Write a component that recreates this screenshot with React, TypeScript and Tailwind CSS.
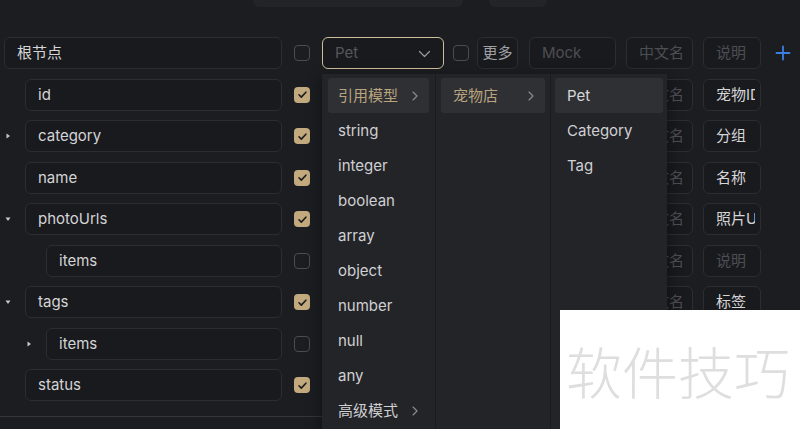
import React from 'react';

const FONT = { fontFamily: 'Inter, "Noto Sans CJK SC", sans-serif' };

type Row = { name: string; level: number; caret?: 'right' | 'down'; checked: boolean; desc?: string; hidden?: boolean };

const ROWS: Row[] = [
  { name: 'id', level: 1, checked: true, desc: '宠物ID' },
  { name: 'category', level: 1, caret: 'right', checked: true, desc: '分组' },
  { name: 'name', level: 1, checked: true, desc: '名称' },
  { name: 'photoUrls', level: 1, caret: 'down', checked: true, desc: '照片Urls' },
  { name: 'items', level: 2, checked: false },
  { name: 'tags', level: 1, caret: 'down', checked: true, desc: '标签' },
  { name: 'items', level: 2, caret: 'right', checked: false, hidden: true },
  { name: 'status', level: 1, checked: true, hidden: true }
];

const TYPES = ['string', 'integer', 'boolean', 'array', 'object', 'number', 'null', 'any'];

const Checkbox = ({ checked, className = '' }: { checked: boolean; className?: string }) =>
  checked ? (
    <span className={`flex h-4 w-4 shrink-0 items-center justify-center rounded-[4px] bg-[#c2aa7e] ${className}`}>
      <svg width="11" height="11" viewBox="0 0 12 12" fill="none">
        <path d="M2.2 6.3l2.5 2.5 5-5.3" stroke="#1d1d1f" strokeWidth="1.8" strokeLinecap="round" strokeLinejoin="round" />
      </svg>
    </span>
  ) : (
    <span className={`block h-4 w-4 shrink-0 rounded-[4px] border border-[#4b4c52] ${className}`} />
  );

const Caret = ({ dir }: { dir: 'right' | 'down' }) => (
  <svg width="6" height="6" viewBox="0 0 6 6" className="text-[#c8c8c8]">
    {dir === 'right' ? <path d="M1.5 0.5L5 3 1.5 5.5z" fill="currentColor" /> : <path d="M0.5 1.5L5.5 1.5 3 5z" fill="currentColor" />}
  </svg>
);

const Chevron = ({ className = '' }: { className?: string }) => (
  <svg width="8" height="12" viewBox="0 0 8 12" fill="none" className={className}>
    <path d="M2 2l4 4-4 4" stroke="currentColor" strokeWidth="1.1" strokeLinecap="round" strokeLinejoin="round" />
  </svg>
);

const Box = ({ className = '', children }: { className?: string; children?: React.ReactNode }) => (
  <div className={`flex h-8 shrink-0 items-center overflow-hidden whitespace-nowrap rounded-md border border-[#2c2d32] bg-[#191a1e] pt-px text-[15px] ${className}`}>
    {children}
  </div>
);

const RestColumns = ({ desc, hidden }: { desc?: string; hidden?: boolean }) => (
  <>
    <Box className="ml-[12px] w-[122px] px-3" />
    <Checkbox checked={false} className="ml-[9px]" />
    <Box className="ml-[8px] w-[41px]" />
    <Box className="ml-[11px] w-[87px]" />
    <Box className="ml-[10px] w-[67px] px-3 text-[#4d4e53]">{!hidden && '中文名'}</Box>
    <Box className={`ml-[10px] w-[58px] pl-3 pr-[5px] ${desc ? 'text-[#d6d6d8]' : 'text-[#4d4e53]'}`}>
      <span className="block flex-1 overflow-hidden">{hidden ? '' : desc || '说明'}</span>
    </Box>
  </>
);

export default function App() {
  return (
    <div className="relative h-[429px] w-[800px] overflow-hidden bg-[#1c1d21] text-[#d4d4d6]" style={FONT}>
      <div className="flex h-[7px]">
        <div className="ml-[253px] w-[210px] rounded-b-md bg-[#232428]" />
        <div className="ml-[26px] w-[58px] rounded-b-md bg-[#232428]" />
      </div>

      <div className="flex flex-col gap-[9.5px] pt-[30px]">
        <div className="flex items-center">
          <Box className="ml-[4px] w-[278px] px-3 text-[#d6d6d8]">根节点</Box>
          <Checkbox checked={false} className="ml-[12px]" />
          <Box className="ml-[12px] w-[122px] border-[#cdbf9c] pl-3 pr-3 text-[#55565b]">
            <span className="flex-1">Pet</span>
            <svg width="13" height="8" viewBox="0 0 13 8" fill="none">
              <path d="M1.5 1.5l5 5 5-5" stroke="#9a9a9e" strokeWidth="1.2" strokeLinecap="round" strokeLinejoin="round" />
            </svg>
          </Box>
          <Checkbox checked={false} className="ml-[9px]" />
          <Box className="ml-[8px] w-[41px] justify-center text-[13px] text-[#a0a0a4]">更多</Box>
          <Box className="ml-[11px] w-[87px] px-3 text-[#4d4e53]">Mock</Box>
          <Box className="ml-[10px] w-[67px] px-3 text-[#4d4e53]">中文名</Box>
          <Box className="ml-[10px] w-[58px] px-3 text-[#4d4e53]">说明</Box>
          <svg width="16" height="16" viewBox="0 0 16 16" className="ml-[14px]">
            <path d="M8 1.5v13M1.5 8h13" stroke="#3d7fe0" strokeWidth="1.8" strokeLinecap="round" />
          </svg>
        </div>

        {ROWS.map((r, i) => (
          <div key={i} className="flex items-center">
            <div className={`flex shrink-0 items-center justify-center ${r.level === 1 ? 'w-[25px] pr-[9px]' : 'w-[46px] pl-[21px] pr-[9px]'}`}>
              {r.caret && <Caret dir={r.caret} />}
            </div>
            <Box className={`${r.level === 1 ? 'w-[257px]' : 'w-[236px]'} px-3 text-[#d4d4d6]`}>{r.name}</Box>
            <Checkbox checked={r.checked} className="ml-[12px]" />
            <RestColumns desc={r.desc} hidden={r.hidden} />
          </div>
        ))}
      </div>

      <div className="absolute bottom-[12px] left-0 right-0 h-px bg-[#35363b]" />

      <div className="absolute left-[322px] top-[74px] flex h-[360px] w-[345px] bg-[#232428] text-[15px] shadow-[0_4px_14px_rgba(0,0,0,0.45)]">
        <div className="flex w-[114px] flex-col border-r border-[#1a1b1e] px-[6px] pt-[4px]">
          <div className="flex h-[35px] items-center rounded-[3px] bg-[#2f3034] pl-[10px] pr-[10px] pt-px text-[#b9a47f]">
            <span className="flex-1">引用模型</span>
            <Chevron className="text-[#8d8d92]" />
          </div>
          {TYPES.map((t) => (
            <div key={t} className="flex h-[35px] items-center pl-[10px] pt-px text-[#d0d0d3]">{t}</div>
          ))}
          <div className="flex h-[35px] items-center pl-[10px] pr-[10px] pt-px text-[#d0d0d3]">
            <span className="flex-1">高级模式</span>
            <Chevron className="text-[#8d8d92]" />
          </div>
        </div>
        <div className="flex w-[115px] flex-col border-r border-[#1a1b1e] px-[5px] pt-[4px]">
          <div className="flex h-[35px] items-center rounded-[3px] bg-[#2f3034] pl-[12px] pr-[10px] pt-px text-[#b9a47f]">
            <span className="flex-1">宠物店</span>
            <Chevron className="text-[#8d8d92]" />
          </div>
        </div>
        <div className="flex flex-1 flex-col px-[4px] pt-[4px]">
          <div className="flex h-[35px] items-center rounded-[3px] bg-[#2f3034] pl-[12px] pt-px text-[#d8d8da]">Pet</div>
          <div className="flex h-[35px] items-center pl-[12px] pt-px text-[#d0d0d3]">Category</div>
          <div className="flex h-[35px] items-center pl-[12px] pt-px text-[#d0d0d3]">Tag</div>
        </div>
      </div>

      <div className="absolute left-[560px] top-[310px] flex h-[119px] w-[240px] items-center bg-white pl-[6px]">
        <span className="text-[56px] leading-none text-[#dedede]" style={{ fontFamily: '"Noto Sans CJK SC", sans-serif', fontWeight: 300 }}>软件技巧</span>
      </div>
    </div>
  );
}
